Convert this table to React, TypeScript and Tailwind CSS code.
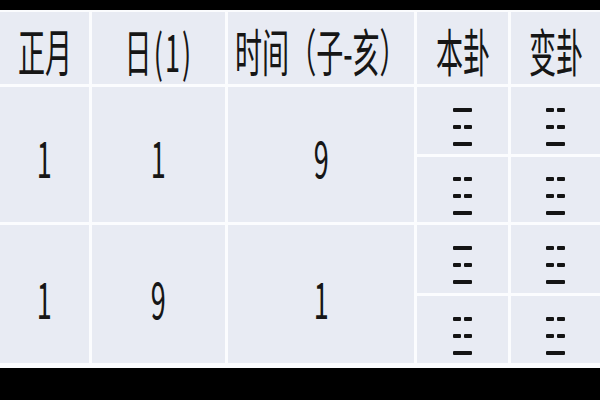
import React from "react";

const FONT = { fontFamily: '"Noto Sans CJK SC", "Noto Sans", sans-serif' };

function Solid() {
  return <div className="h-[4px] w-[19px] rounded-[1px] bg-[#141414]" />;
}
function Broken() {
  return (
    <div className="flex h-[4px] w-[19px] gap-[3px]">
      <div className="h-[4px] w-[8px] rounded-[1px] bg-[#141414]" />
      <div className="h-[4px] w-[8px] rounded-[1px] bg-[#141414]" />
    </div>
  );
}

function Trigram({ lines }: { lines: number[] }) {
  return (
    <div className="mt-[12px] flex flex-col gap-[13px]">
      {lines.map((l, i) => (l ? <Solid key={i} /> : <Broken key={i} />))}
    </div>
  );
}

function Txt({ children, wide }: { children: React.ReactNode; wide?: boolean }) {
  return (
    <span
      className={
        wide
          ? "inline-block scale-x-[0.53] whitespace-nowrap text-[51px] font-normal leading-none tracking-[4px] text-[#161616]"
          : "inline-block scale-x-[0.53] whitespace-nowrap text-[51px] font-normal leading-none text-[#161616]"
      }
    >
      {children}
    </span>
  );
}

const cell = "flex items-center justify-center overflow-visible bg-[#e8ebf3]";

export default function App() {
  const LI = [1, 0, 1];
  const ZHEN = [0, 0, 1];
  return (
    <div className="flex h-[400px] w-[600px] flex-col bg-black" style={FONT}>
      <div className="h-[10px] shrink-0" />
      <div className="shrink-0 bg-[#fbfcfe] pt-[2px] pb-[5px]">
        <div className="grid grid-cols-[89px_133px_186px_91px_89px] grid-rows-[72px_67px_65px_68px_67px] gap-[3px]">
          <div className={`${cell} pt-[4px]`}><Txt>正月</Txt></div>
          <div className={`${cell} pt-[4px]`}><Txt wide>日(1)</Txt></div>
          <div className={`${cell} pt-[4px]`}><Txt>时间（子-亥）</Txt></div>
          <div className={`${cell} pt-[4px]`}><Txt>本卦</Txt></div>
          <div className={`${cell} pt-[4px]`}><Txt>变卦</Txt></div>

          <div className={`${cell} row-span-2 pt-[4px]`}><Txt>1</Txt></div>
          <div className={`${cell} row-span-2 pt-[4px]`}><Txt>1</Txt></div>
          <div className={`${cell} row-span-2 pt-[4px]`}><Txt>9</Txt></div>
          <div className={cell}><Trigram lines={LI} /></div>
          <div className={cell}><Trigram lines={ZHEN} /></div>
          <div className={cell}><Trigram lines={ZHEN} /></div>
          <div className={cell}><Trigram lines={ZHEN} /></div>

          <div className={`${cell} row-span-2 pt-[6px]`}><Txt>1</Txt></div>
          <div className={`${cell} row-span-2 pt-[6px]`}><Txt>9</Txt></div>
          <div className={`${cell} row-span-2 pt-[6px]`}><Txt>1</Txt></div>
          <div className={cell}><Trigram lines={LI} /></div>
          <div className={cell}><Trigram lines={ZHEN} /></div>
          <div className={cell}><Trigram lines={ZHEN} /></div>
          <div className={cell}><Trigram lines={ZHEN} /></div>
        </div>
      </div>
    </div>
  );
}
